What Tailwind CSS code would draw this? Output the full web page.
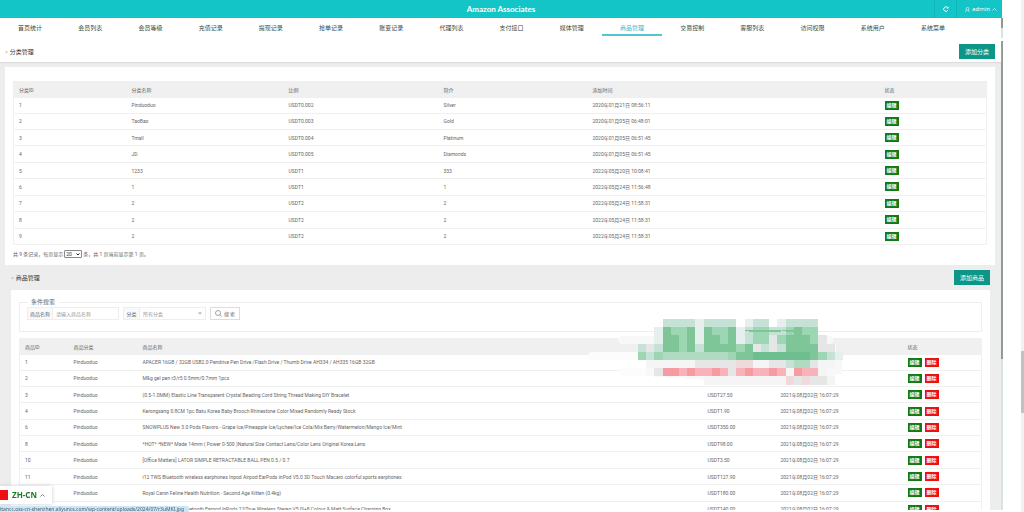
<!DOCTYPE html>
<html lang="zh-CN">
<head>
<meta charset="utf-8">
<title>Amazon Associates</title>
<script src="https://cdn.jsdelivr.net/npm/@tailwindcss/browser@4"></script>
</head>
<body class="h-screen overflow-hidden bg-white font-['Roboto','Noto_Sans_CJK_SC',sans-serif] text-[5px] leading-[8px] text-[#666]">
<div class="flex h-screen">
  <div class="mb-0.5 flex min-w-0 flex-1 flex-col overflow-hidden">
    <header class="mr-px flex h-[18px] shrink-0 items-center bg-[#13c5c7] text-white">
      <div class="w-[68px]"></div>
      <h1 class="flex-1 text-center font-['Lato'] text-[8px] leading-[10px] font-bold">Amazon Associates</h1>
      <button type="button" aria-label="刷新" class="flex h-full w-[22px] items-center justify-center border-l border-[#12b5b8]">
        <svg class="size-[6px]" viewBox="0 0 12 12" fill="none" stroke="white" stroke-width="2"><path d="M10 8a4.5 4.5 0 1 1-.5-4.500"/><path d="M11 1v4H7z" fill="white" stroke="none"/></svg>
      </button>
      <button type="button" class="flex h-full w-[46px] items-center gap-[2px] border-l border-[#12b5b8] pl-[8px] text-[6px]">
        <svg class="size-[5px] shrink-0" viewBox="0 0 10 10" fill="none" stroke="white" stroke-width="1.200"><circle cx="5" cy="3.500" r="2.800"/><path d="M1 10c0-2 1-3.500 2.500-4M6 6l3 4"/></svg>
        <span class="font-['Noto_Sans']">admin</span>
        <svg class="h-[3px] w-[5px] shrink-0" viewBox="0 0 10 6" fill="none" stroke="white" stroke-width="1.300"><path d="M1 5l4-4 4 4"/></svg>
      </button>
    </header>
    <div class="flex min-h-0 flex-1">
      <main class="flex min-w-0 flex-1 flex-col bg-[#ededed]">
        <nav id="nav" class="flex h-[20px] shrink-0 bg-white pr-[38px] text-[6px] text-[#3b4a40]"></nav>
        <div class="z-10 flex h-[24px] shrink-0 items-center justify-between bg-white pt-[3px] pr-[6px] pl-[5px] shadow-[0_1px_1px_#ddd]">
          <h2 class="flex gap-[2px] text-[6px] text-[#333]"><span class="text-[#aaa]">»</span>分类管理</h2>
          <button type="button" class="h-[15px] w-[36px] bg-[#0b9688] text-[6px] text-white">添加分类</button>
        </div>
        <section class="mx-[6px] mt-[5px] ml-[5px] shrink-0 bg-white px-[8px] pt-[14px] pb-[7px]">
          <table class="h-[164px] w-full table-fixed border-collapse border border-[#f0f0f0] text-left">
            <colgroup><col class="w-[113px]"><col class="w-[157px]"><col class="w-[155px]"><col class="w-[149px]"><col class="w-[292px]"><col></colgroup>
            <thead class="bg-[#f0f0f0]"><tr class="h-[16px]"><th class="p-0 pl-[5px] font-normal">分类ID</th><th class="p-0 pl-[5px] font-normal">分类名称</th><th class="p-0 pl-[5px] font-normal">比例</th><th class="p-0 pl-[5px] font-normal">简介</th><th class="p-0 pl-[5px] font-normal">添加时间</th><th class="p-0 pl-[5px] font-normal">状态</th></tr></thead>
            <tbody id="cats"></tbody>
          </table>
          <div class="mt-[5px] flex items-center gap-px">
            <label for="per">共 9 条记录，每页显示</label>
            <div class="relative flex">
              <select id="per" class="h-[8px] w-[18px] appearance-none rounded-[1px] border border-[#888] bg-white pl-px text-[5px] leading-[6px] text-[#333]"><option>20</option></select>
              <svg class="pointer-events-none absolute top-[3px] right-[2px] h-[3px] w-[4px]" viewBox="0 0 8 6" fill="none" stroke="#222" stroke-width="2"><path d="M1 1l3 3 3-3"/></svg>
            </div>
            <span>条，共 1 页当前显示第 1 页。</span>
          </div>
        </section>
        <div class="mr-[11px] ml-[11px] flex h-[25px] shrink-0 items-center justify-between">
          <h2 class="flex gap-[2px] text-[6px] text-[#333]"><span class="text-[#aaa]">»</span>商品管理</h2>
          <button type="button" class="h-[15px] w-[36px] bg-[#0b9688] text-[6px] text-white">添加商品</button>
        </div>
        <section class="relative mr-[11px] ml-[11px] flex-1 bg-white px-[8px] pt-[8px]">
          <fieldset class="h-[34px] border border-[#eee] px-[7px]">
            <legend class="px-[4px] text-[6px] leading-[8px]">条件搜索</legend>
            <form class="mt-px flex gap-[4px]">
              <div class="flex h-[13px] w-[92px] border border-[#eee]">
                <label for="name" class="flex w-[25px] shrink-0 items-center justify-center border-r border-[#eee] bg-[#fafafa]">商品名称</label>
                <input id="name" type="text" placeholder="请输入商品名称" class="w-full min-w-0 pl-[3px] placeholder:text-[#999]">
              </div>
              <div class="relative flex h-[13px] w-[83px] border border-[#eee]">
                <label for="cat" class="flex w-[16px] shrink-0 items-center justify-center border-r border-[#eee] bg-[#fafafa]">分类</label>
                <select id="cat" class="w-full appearance-none pl-[3px] text-[#999]"><option>所有分类</option></select>
                <svg class="pointer-events-none absolute top-[4px] right-[3px] h-[3px] w-[4px]" viewBox="0 0 8 6"><path d="M0 1h8L4 5z" fill="#aaa"/></svg>
              </div>
              <button type="button" class="flex h-[13px] w-[30px] items-center justify-center gap-[2px] border border-[#ddd] bg-white">
                <svg class="size-[7px]" viewBox="0 0 14 14" fill="none" stroke="#666" stroke-width="1.200"><circle cx="6" cy="6" r="5"/><path d="M9.500 9.500L13.500 13"/></svg>搜 索</button>
            </form>
          </fieldset>
          <table class="mt-[6px] h-[180px] w-full table-fixed border-collapse border border-[#f0f0f0] text-left">
            <colgroup><col class="w-[49px]"><col class="w-[69px]"><col class="w-[565px]"><col class="w-[73px]"><col class="w-[127px]"><col></colgroup>
            <thead class="bg-[#f0f0f0]"><tr class="h-[16px]"><th class="p-0 pl-[5px] font-normal">商品ID</th><th class="p-0 pl-[5px] font-normal">商品分类</th><th class="p-0 pl-[5px] font-normal">商品名称</th><th></th><th></th><th class="p-0 pl-[5px] font-normal">状态</th></tr></thead>
            <tbody id="goods"></tbody>
          </table>
          <svg id="mosaic" class="absolute top-[29px] left-[577px] h-[66px] w-[255px]" viewBox="0 0 255 66" aria-hidden="true" shape-rendering="crispEdges">
            <g fill="#f8f8f8"><rect x="30" y="17" width="215" height="8" rx="4"/><rect y="33" width="60" height="8" rx="4" fill="#fcfcfc"/><rect x="30" y="49" width="222" height="8" rx="4" fill="#fcfcfc"/><path d="M58 25h190v16h6v14h-8v8H150L58 57z"/></g>
          </svg>
        </section>
      </main>
      <div class="flex w-[2px] flex-col bg-[#d8e4de]" aria-hidden="true">
        <div class="h-[10px] bg-[#8f9a93]"></div><div class="h-[10px]"></div><div class="h-[3px] bg-white"></div><div class="h-[318px] bg-[#8f9a93]"></div>
      </div>
    </div>
  </div>
  <div class="w-[18px] bg-white"></div>
  <div class="w-[3px] bg-[#f1f1f1] pt-[351px]" aria-hidden="true"><div class="h-[62px] bg-[#c1c1c1]"></div></div>
</div>
<button type="button" class="fixed bottom-[8px] left-0 z-20 flex h-[18px] w-[52px] items-center bg-white font-['Noto_Sans'] text-[8px] font-bold text-[#1b7a26] shadow-[0_0_4px_#ccc]">
  <span class="mr-[4px] h-[10px] w-[8px] bg-[#ee1111]"></span>ZH-CN
  <svg class="ml-[3px] h-[3px] w-[5px]" viewBox="0 0 10 6" fill="none" stroke="#555" stroke-width="1.500"><path d="M1 5l4-4 4 4"/></svg>
</button>
<div class="fixed bottom-0 left-0 z-20 h-[6px] w-[189px] overflow-hidden rounded-tr-[2px] bg-[#cbe6f7] font-['Noto_Sans'] leading-[7px] whitespace-nowrap text-[#47606e]">itancc.oss-cn-shenzhen.aliyuncs.com/wp-content/uploads/2024/07/r3uMKI.jpg</div>
<script>
const nav = ['首页统计','会员列表','会员等级','充值记录','提现记录','抢单记录','账变记录','代理列表','支付接口','媒体管理','商品管理','交易控制','客服列表','访问权限','系统用户','系统菜单'];
document.getElementById('nav').innerHTML = nav.map(t => t === '商品管理'
  ? `<a href="#" class="mb-[2px] flex flex-1 items-center justify-center border-b-2 border-[#55c3d0] pt-[4px] text-[#3fb6c6]">${t}</a>`
  : `<a href="#" class="flex flex-1 items-center justify-center">${t}</a>`).join('');

const td = t => `<td class="truncate p-0 pl-[5px]">${t}</td>`;
const edit = '<button type="button" class="block h-[9px] w-[14px] bg-[#137a17] font-bold leading-[9px] text-white">编辑</button>';
const del = '<button type="button" class="block h-[9px] w-[14px] bg-[#ee1111] font-bold leading-[9px] text-white">删除</button>';
const row = (cells, actions) => `<tr class="border-b border-[#f0f0f0]">${cells.map(td).join('')}<td class="p-0 pl-[5px]"><div class="flex gap-[3px]">${actions}</div></td></tr>`;

const cats = [
  [1,'Pinduoduo','USDT0.002','Silver','2020年01月21日 08:56:11'],
  [2,'TaoBao','USDT0.003','Gold','2020年01月05日 06:48:01'],
  [3,'Tmall','USDT0.004','Platinum','2020年01月05日 06:51:45'],
  [4,'JD','USDT0.005','Diamonds','2020年01月05日 06:51:45'],
  [5,'1233','USDT1','333','2022年05月20日 10:08:41'],
  [6,'1','USDT1','1','2022年05月24日 11:56:48'],
  [7,'2','USDT2','2','2022年05月24日 11:58:31'],
  [8,'2','USDT2','2','2022年05月24日 11:58:31'],
  [9,'2','USDT2','2','2022年05月24日 11:58:31']];
document.getElementById('cats').innerHTML = cats.map(c => row(c, edit)).join('');

const when = '2021年08月02日 16:07:29';
const goods = [
  [1,'APACER 16GB / 32GB USB2.0 Pendrive Pen Drive /Flash Drive / Thumb Drive AH334 / AH335 16GB 32GB','',''],
  [2,'M&amp;g gel pen r3/r5 0.5mm/0.7mm 1pcs','',''],
  [3,'(0.5-1.0MM) Elastic Line Transparent Crystal Beading Cord String Thread Making DIY Bracelet','USDT27.50',when],
  [4,'Kerongsang 0.8CM 1pc Batu Korea Baby Brooch Rhinestone Color Mixed Randomly Ready Stock','USDT1.90',when],
  [6,'SNOWPLUS New 3.0 Pods Flavors - Grape Ice/Pineapple Ice/Lychee/Ice Cola/Mix Berry/Watermelon/Mango Ice/Mint','USDT350.00',when],
  [8,'*HOT* *NEW* Made 14mm ( Power 0-500 )Natural Size Contact Lens/Color Lens Original Korea Lens','USDT98.00',when],
  [10,'[Office Matters] LATOR SIMPLE RETRACTABLE BALL PEN 0.5 / 0.7','USDT3.50',when],
  [11,'i12 TWS Bluetooth wireless earphones Inpod Airpod EarPods inPod V5.0 3D Touch Macaro colorful sports earphones','USDT127.90',when],
  ['','Royal Canin Feline Health Nutrition - Second Age Kitten (0.4kg)','USDT180.00',when],
  ['','i12 TWS Wireless Bluetooth Earpod InPods 12|True Wireless Stereo V5.0|+8 Colour &amp; Matt Surface Charging Box','USDT140.00',when]];
document.getElementById('goods').innerHTML = goods.map(g => row([g[0],'Pinduoduo',...g.slice(1)], edit + del)).join('');

const tones = {G:'#7ec598',D:'#6dbf90',g:'#9dd6b3',h:'#b0dac1',c:'#c6e2d6',a:'#e6efee',e:'#e6e6e6',f:'#f5f5f5',p:'#efd9db',R:'#f59ba2',r:'#f8b3ba'};
const cells = [
  '...ccccacccc.acc.acccc...',
  '..aGggGaGggGacggccgGgg...',
  '..aGGgGaGGgGacggegGGGge..',
  'cecGGgGcGGGGgGececGGGGee.',
  'gcghhhhhhhhgGGDDDDDDDGgca',
  '.ffffffeeeeeppffeechheff.',
  '..eRRrRrrRrerRrrRrfRrrf..',
  '........ffffffffffpepeef.'];
// The redacted area starts 50px into its box; every block is 205/25 px wide.
const side = 205 / 25;
document.getElementById('mosaic').insertAdjacentHTML('beforeend', cells.map((line, y) => [...line].map((k, x) =>
  tones[k] ? `<rect x="${50 + x * side}" y="${y * side}" width="${side}" height="${side}" fill="${tones[k]}"/>` : '').join('')).join('')
  + '<path d="M155 11h32l12 1-12 1h-24zM192 11h12l14 2h-18z" fill="#7ec598"/>');
</script>
</body>
</html>
